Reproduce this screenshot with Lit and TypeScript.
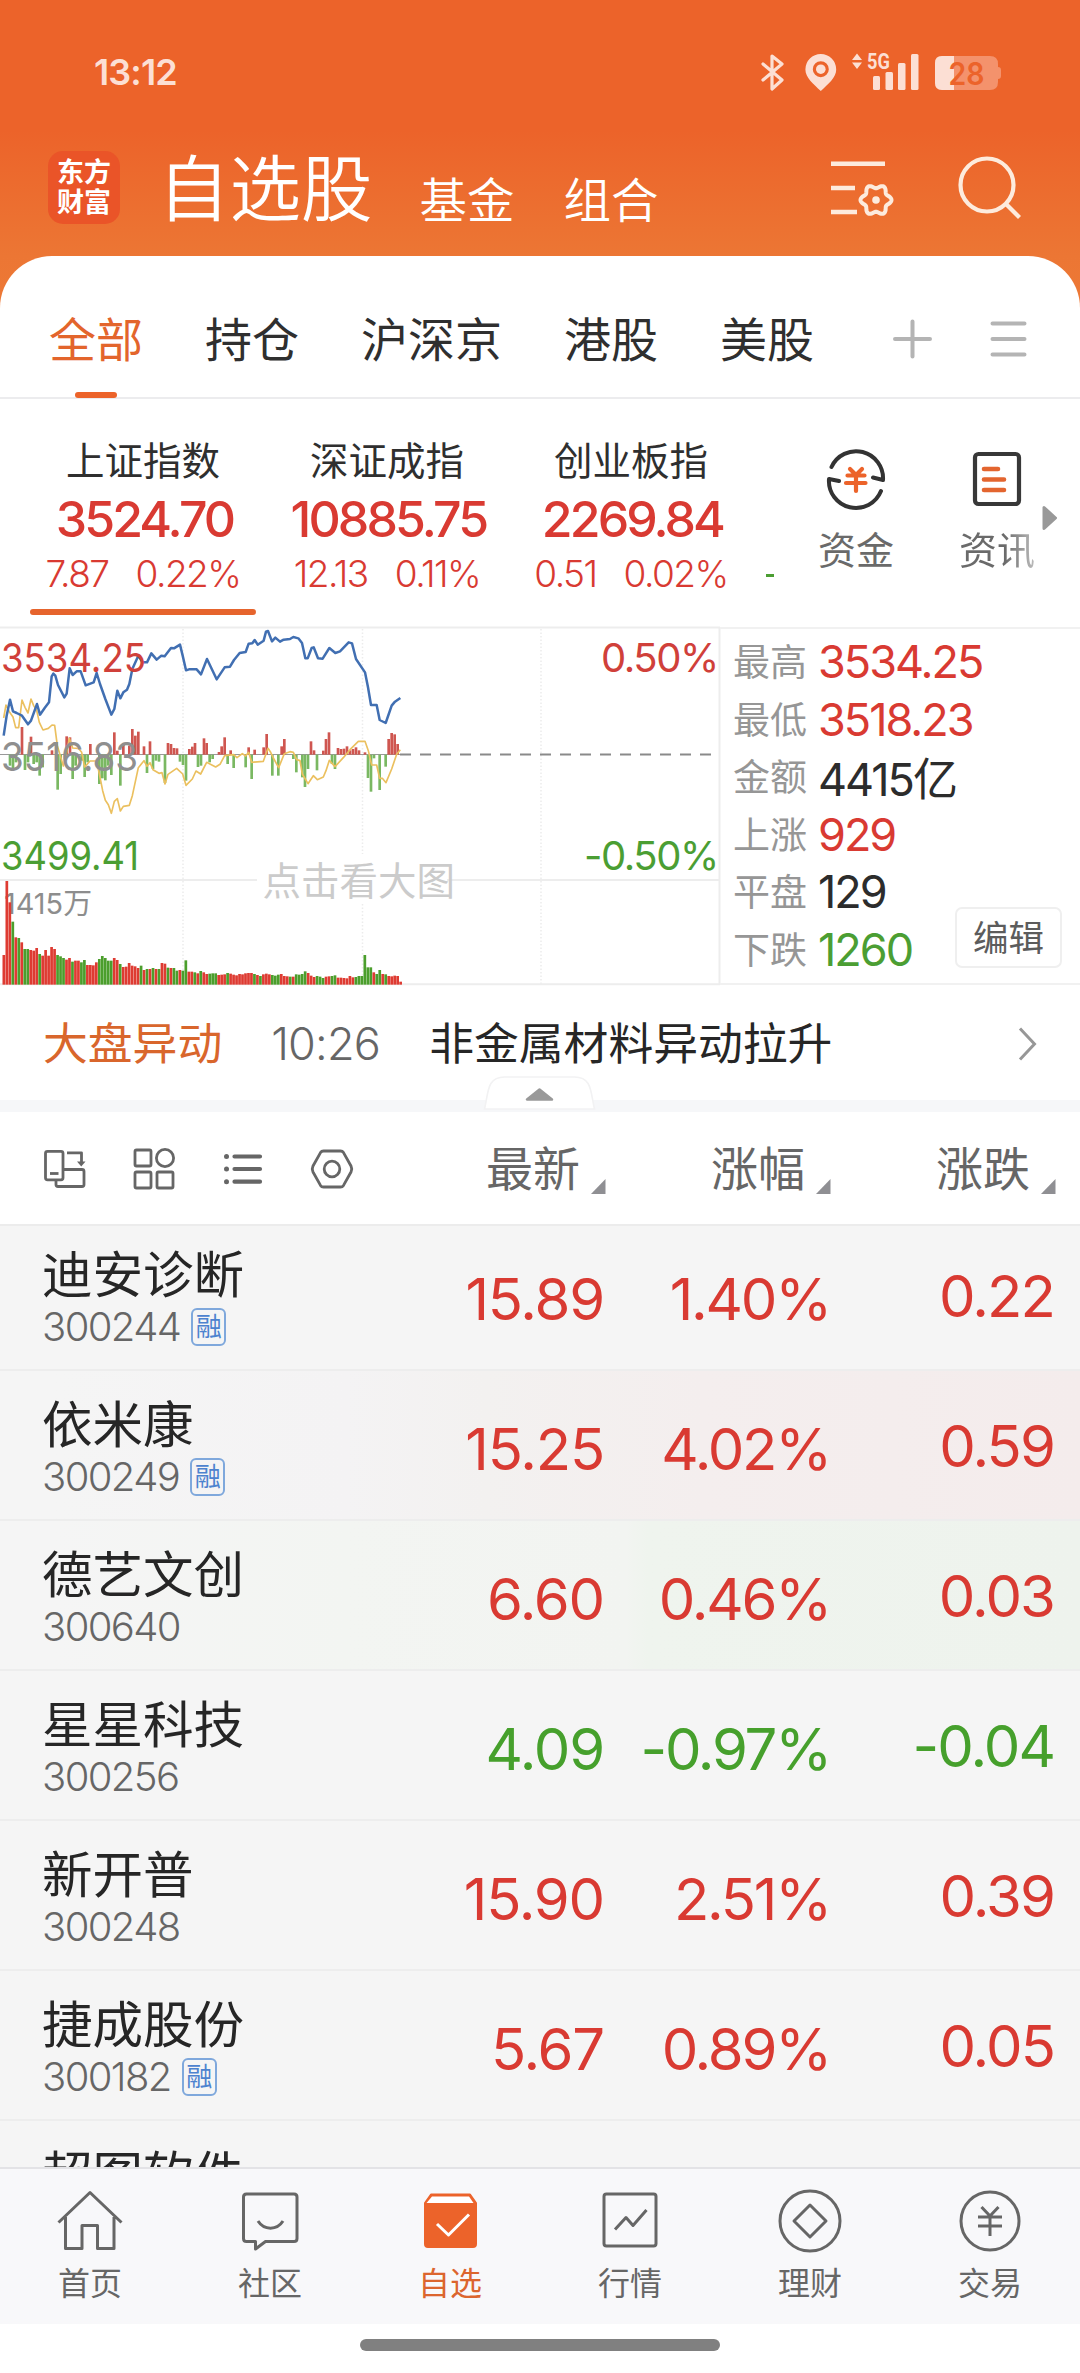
import { LitElement, html, svg, css } from "lit";
import { customElement } from "lit/decorators.js";
import { classMap } from "lit/directives/class-map.js";

type Tone = "up" | "down" | "flat";

interface Stock {
  name: string;
  code: string;
  margin?: boolean;
  price: string;
  pct: string;
  diff: string;
  tone: Tone;
  flash?: "hot" | "cool";
}

const STOCKS: Stock[] = [
  { name: "迪安诊断", code: "300244", margin: true, price: "15.89", pct: "1.40%", diff: "0.22", tone: "up" },
  { name: "依米康", code: "300249", margin: true, price: "15.25", pct: "4.02%", diff: "0.59", tone: "up", flash: "hot" },
  { name: "德艺文创", code: "300640", price: "6.60", pct: "0.46%", diff: "0.03", tone: "up", flash: "cool" },
  { name: "星星科技", code: "300256", price: "4.09", pct: "-0.97%", diff: "-0.04", tone: "down" },
  { name: "新开普", code: "300248", price: "15.90", pct: "2.51%", diff: "0.39", tone: "up" },
  { name: "捷成股份", code: "300182", margin: true, price: "5.67", pct: "0.89%", diff: "0.05", tone: "up" },
  { name: "超图软件", code: "", price: "", pct: "", diff: "", tone: "up" },
];

const INDEXES = [
  { name: "上证指数", value: "3524.70", diff: "7.87", pct: "0.22%", active: true },
  { name: "深证成指", value: "10885.75", diff: "12.13", pct: "0.11%", active: false },
  { name: "创业板指", value: "2269.84", diff: "0.51", pct: "0.02%", active: false },
];

const STATS: { label: string; value: string; tone: Tone }[] = [
  { label: "最高", value: "3534.25", tone: "up" },
  { label: "最低", value: "3518.23", tone: "up" },
  { label: "金额", value: "4415亿", tone: "flat" },
  { label: "上涨", value: "929", tone: "up" },
  { label: "平盘", value: "129", tone: "flat" },
  { label: "下跌", value: "1260", tone: "down" },
];

/* Chart data is kept at three units per pixel. */
const PRICE_LINE =
  "11,380 20,320 30,272 39,307 50,312 66,320 84,346 93,335 111,285 120,317 134,297 147,280 155,202 160,194 166,200 174,228 193,265 200,254 209,178 218,198 230,187 242,187 257,229 281,220 290,192 300,225 316,270 334,317 343,300 352,245 361,268 370,250 381,242 388,225 397,180 415,140 428,160 441,160 454,133 470,152 484,140 494,142 513,117 522,118 540,107 548,140 558,184 567,181 590,181 603,196 621,150 650,211 674,175 690,173 702,153 719,132 737,129 746,104 757,103 764,93 773,107 791,95 798,68 804,66 816,97 826,86 840,98 851,92 870,90 880,84 895,88 906,102 916,148 923,148 935,117 941,115 954,148 968,149 988,117 1006,132 1020,127 1046,100 1056,103 1068,150 1095,190 1104,235 1113,288 1130,288 1139,333 1157,342 1175,290 1185,278 1201,267";
const AVG_LINE =
  "11,327 18,288 28,308 39,324 47,356 56,356 66,273 75,295 84,312 93,270 101,290 110,304 118,340 129,363 145,358 156,348 164,349 172,410 190,471 200,430 208,388 218,417 235,418 245,430 254,474 270,456 290,456 298,495 308,545 316,574 325,587 334,613 343,577 352,569 361,606 370,592 388,589 397,560 415,476 432,455 441,472 450,461 459,482 477,493 486,491 495,525 504,496 530,478 548,495 558,529 577,510 588,486 602,495 620,460 647,474 660,466 674,440 701,437 711,446 727,434 737,441 746,430 755,460 790,457 804,418 812,430 820,447 836,476 853,434 870,428 880,430 890,452 900,455 907,495 924,524 940,500 952,512 970,504 978,485 988,454 1005,473 1030,446 1050,422 1075,397 1095,397 1105,425 1115,468 1130,468 1139,508 1147,508 1158,521 1175,480 1190,436 1201,422";
const PULSE: [number, number][] = [
  [66, 354], [93, 383], [156, 424], [200, 382], [210, 385], [271, 405], [343, 370], [352, 425], [370, 405], [388, 410],
  [397, 360], [406, 380], [415, 368], [432, 412], [450, 397], [504, 402], [513, 405], [522, 417], [531, 418], [568, 420],
  [577, 413], [585, 402], [612, 388], [620, 402], [657, 429], [665, 412], [674, 385], [692, 424], [746, 415], [764, 422], [791, 415],
  [800, 375], [845, 412], [853, 390], [933, 397], [942, 424], [970, 425], [978, 390], [987, 370], [1014, 417], [1023, 420],
  [1032, 419], [1041, 412], [1050, 424], [1059, 420], [1068, 415], [1077, 424], [1095, 430], [1166, 390], [1175, 372],
  [1184, 376], [1193, 405], [30, 470], [39, 478], [48, 460], [75, 483], [84, 460], [101, 465], [110, 460], [119, 500],
  [128, 475], [173, 542], [182, 495], [218, 510], [227, 470], [245, 455], [254, 504], [263, 460], [298, 525], [307, 508],
  [316, 514], [325, 470], [334, 498], [361, 530], [441, 492], [459, 480], [468, 455], [477, 458], [495, 522], [540, 458],
  [549, 468], [558, 515], [594, 474], [603, 470], [629, 460], [638, 450], [683, 465], [701, 477], [737, 475], [755, 510],
  [817, 500], [835, 500], [880, 450], [889, 490], [907, 505], [915, 534], [924, 480], [951, 484], [996, 465], [1005, 480],
  [1104, 507], [1113, 548], [1122, 448], [1139, 543], [1157, 473],
];
const VOLUME =
  "r1038 r816 r880 g938 r985 g987 r1000 g1020 g1020 r1023 r1025 r1017 g1035 r1040 r1023 r1040 r1014 r1020 g1038 g1042 g1047 r1052 r1047 g1058 r1055 r1055 g1060 g1053 r1068 r1068 r1069 r1060 g1050 g1041 g1047 g1055 g1055 r1047 r1053 g1065 r1074 r1073 r1062 r1070 r1072 r1077 g1070 r1083 g1080 r1080 g1077 r1080 g1080 r1062 r1064 g1076 r1077 g1077 g1085 r1083 g1085 g1054 r1088 r1088 g1090 r1093 g1086 r1090 r1095 g1094 g1093 g1093 r1098 r1097 r1096 g1092 r1094 r1097 r1099 r1095 r1096 r1093 r1092 r1092 g1095 r1098 g1101 r1096 r1094 r1096 g1098 g1100 g1097 r1095 r1101 r1102 g1103 r1103 g1096 g1097 g1095 g1087 r1092 r1100 r1104 g1101 g1103 g1107 r1103 r1102 g1101 g1099 r1106 r1106 r1107 r1108 r1101 r1105 g1104 g1101 g1101 g1038 g1075 g1075 r1090 g1095 g1083 r1095 g1096 r1101 r1102 r1100 r1101 r1118".split(" ");

const cogPath = (cx: number, cy: number, r: number, depth: number, lobes: number): string => {
  const pts: string[] = [];
  for (let i = 0; i < 120; i++) {
    const a = (i / 120) * Math.PI * 2;
    const rr = r + depth * Math.cos(a * lobes);
    pts.push(`${(cx + rr * Math.cos(a)).toFixed(2)},${(cy + rr * Math.sin(a)).toFixed(2)}`);
  }
  return `M${pts.join("L")}Z`;
};

const FONT = css`"Inter", "Noto Sans CJK SC", sans-serif`;

@customElement("status-bar")
class StatusBar extends LitElement {
  static styles = css`
    :host { display: flex; height: 144px; padding: 0 78px 0 94px; justify-content: space-between; align-items: center; box-sizing: border-box; font-family: ${FONT}; color: #fcdfd4; }
    .time { font-size: 36px; font-weight: 600; letter-spacing: -0.9px; line-height: 40px; }
    .icons { display: block; overflow: visible; }
    .net { font: 700 19px "Roboto", sans-serif; fill: #fcdfd4; }
    .bat { font: 600 31px "Inter", sans-serif; fill: #ec632a; }
  `;
  render() {
    return html`
      <span class="time">13:12</span>
      <svg class="icons" width="241" height="56" viewBox="761 44 241 56" fill="#fcdfd4">
        <path d="M763 64l19 16-10 9V56l10 8-19 16" fill="none" stroke="#fcdfd4" stroke-width="3.2" stroke-linejoin="round" stroke-linecap="round" />
        <path fill-rule="evenodd" d="M820.8 54a15.4 15.4 0 0 1 15.4 15.400c0 8-8 14.500-15.400 21.600-7.400-7.100-15.400-13.600-15.400-21.600A15.400 15.400 0 0 1 820.800 54zm0 7.200a8 8 0 1 0 0 16 8 8 0 0 0 0-16z" />
        <circle cx="820.8" cy="69.200" r="4.800" />
        <path d="M852 60l5-6.500 5 6.500zM852 62.500h10l-5 6.500z" />
        <text class="net" transform="translate(867 69) scale(0.96 1.16)">5G</text>
        <rect x="873" y="76" width="7" height="14" rx="1.500" />
        <rect x="885.500" y="72" width="7.500" height="18" rx="1.500" />
        <rect x="898" y="63" width="7.500" height="27" rx="1.500" />
        <rect x="911" y="54" width="7.500" height="36" rx="1.500" />
        <path d="M942 56h48q8 0 8 8v3q3 0 3 3v6q0 3-3 3v3q0 8-8 8h-48q-7 0-7-7V63q0-7 7-7z" fill="#f4926c" />
        <path d="M954 56v34h-12q-7 0-7-7V63q0-7 7-7z" />
        <text class="bat" x="948.500" y="84.500" textLength="36" lengthAdjust="spacingAndGlyphs">28</text>
      </svg>
    `;
  }
}

@customElement("app-header")
class AppHeader extends LitElement {
  static styles = css`
    :host { display: flex; height: 112px; box-sizing: border-box; padding: 0 58px 0 48px; align-items: flex-start; font-family: ${FONT}; color: #fff; }
    .logo { width: 72px; height: 73px; margin-top: 7px; border-radius: 15px; background: #ea5428; display: flex; flex-direction: column; align-items: center; justify-content: center; font-size: 27px; line-height: 30px; font-weight: 700; }
    .title { margin: 3px 0 0 38px; font-size: 71.500px; line-height: 84px; }
    .sub { margin: 32px 0 0 49px; font-size: 47.500px; line-height: 50px; }
    .sub.first { margin-left: 47px; }
    .tools { margin: 10px 0 0 auto; display: flex; }
    .title, .sub { font-weight: 350; }
  `;
  render() {
    return html`
      <div class="logo"><span>东方</span><span>财富</span></div>
      <div class="title">自选股</div>
      <div class="sub first">基金</div>
      <div class="sub">组合</div>
      <svg class="tools" width="193" height="70" viewBox="829 153 193 70" fill="none" stroke="#fdebdd" stroke-width="4.600">
        <path d="M831 162.700h54M831 187h24M831 211h26" />
        <path d=${cogPath(876, 199, 13.6, 1.9, 6)} stroke-width="4" />
        <circle cx="876" cy="199" r="3.800" fill="#fdebdd" stroke="none" />
        <circle cx="987" cy="184" r="26.500" stroke-width="4.200" />
        <path d="M1006 203l13.500 13.500" stroke-width="4.200" />
      </svg>
    `;
  }
}

@customElement("group-tabs")
class GroupTabs extends LitElement {
  static styles = css`
    :host { display: flex; height: 143px; box-sizing: border-box; padding: 0 52px 0 49px; border-bottom: 2px solid #ececee; font-family: ${FONT}; color: #2f2f2f; }
    .tab { display: flex; flex-direction: column; align-items: center; font-size: 47px; line-height: 54px; margin-right: 62px; padding-top: 57px; box-sizing: border-box; height: 142px; justify-content: space-between; font-weight: 400; }
    .active { color: #e3652c; }
    .mark { width: 42px; height: 6px; border-radius: 3px; }
    .active .mark { background: #ec632a; }
    .tools { margin: 60px 0 0 auto; }
  `;
  render() {
    return html`
      ${["全部", "持仓", "沪深京", "港股", "美股"].map(
        (t, i) => html`<div class=${classMap({ tab: true, active: i === 0 })}><span>${t}</span><i class="mark"></i></div>`
      )}
      <svg class="tools" width="138" height="48" viewBox="890 316 138 48" stroke="#b4b4b4" stroke-width="4" stroke-linecap="round">
        <path d="M895 339h35M912.500 321.500v35M992.500 323.500h32M992.500 339h32M992.500 354.500h32" />
      </svg>
    `;
  }
}

@customElement("index-strip")
class IndexStrip extends LitElement {
  static styles = css`
    :host { display: flex; height: 228px; box-sizing: border-box; padding-left: 21px; font-family: ${FONT}; overflow: hidden; }
    .item { width: 244px; flex: none; display: flex; flex-direction: column; align-items: center; color: #d93a32; padding-top: 37px; box-sizing: border-box; }
    .name { font-size: 38.500px; line-height: 50px; color: #2f2f2f; }
    .value { font-size: 50px; line-height: 60px; margin-top: 3px; font-weight: 500; letter-spacing: -2.900px; margin-right: -2.900px; }
    .chg { display: flex; gap: 27px; font-size: 37px; line-height: 44px; margin-top: 3px; letter-spacing: -1.500px; font-weight: 350; }
    .bar { width: 226px; height: 6px; border-radius: 3px; margin-top: 13px; }
    .bar.on { background: #e6642d; }
    .next { width: 8px; flex: none; height: 3px; background: #4b9e33; margin: 175px 0 0 13px; }
    .tools { display: flex; margin-left: 11.500px; padding-top: 48px; color: #6a6a6a; align-items: flex-start; }
    .tool { width: 141px; flex: none; display: flex; flex-direction: column; align-items: center; font-size: 38px; line-height: 48px; gap: 15px; }
    .tool.fade .label { background: linear-gradient(90deg, #6a6a6a 60%, #bdbdbd 100%); -webkit-background-clip: text; color: transparent; }
    .arrow { margin: 57px 0 0 -27px; }
    svg { display: block; flex: none; }
  `;
  render() {
    return html`
      ${INDEXES.map(
        (x) => html`<div class="item">
          <span class="name">${x.name}</span>
          <span class="value">${x.value}</span>
          <span class="chg"><span>${x.diff}</span><span>${x.pct}</span></span>
          <i class=${classMap({ bar: true, on: x.active })}></i>
        </div>`
      )}
      <i class="next"></i>
      <div class="tools">
        <div class="tool">
          <svg width="64" height="64" viewBox="824 448 64 64" fill="none" stroke="#333" stroke-width="4" stroke-linecap="round" stroke-linejoin="round">
            <path d="M831.500 468A27 27 0 0 1 883 481l-10-2.500M881 492a27 27 0 0 1-52-12l10 2" />
            <path d="M850 470l6 6 6-6M847.500 476.500h17M846 484h19.500M856 476v16" stroke="#ec632a" stroke-width="4.200" />
          </svg>
          <span>资金</span>
        </div>
        <div class="tool fade">
          <svg width="64" height="64" viewBox="965 448 64 64" fill="none" stroke-linecap="round">
            <rect x="975" y="455" width="44" height="50" rx="3.500" stroke="#383838" stroke-width="4.200" />
            <path d="M984 470h14M984 480.500h20M984 491h20" stroke="#e3652f" stroke-width="4.600" />
          </svg>
          <span class="label">资讯</span>
        </div>
        <svg class="arrow" width="18" height="28" viewBox="1040 505 18 28"><path d="M1043 508.500v21l11.500-10.500z" fill="#999" stroke="#999" stroke-width="3" stroke-linejoin="round" /></svg>
      </div>
    `;
  }
}

@customElement("market-chart")
class MarketChart extends LitElement {
  static styles = css`
    :host { display: block; width: 720px; height: 358px; }
    svg { display: block; overflow: visible; }
    text { font-family: ${FONT}; font-size: 40px; }
    .up { fill: #d0403a; }
    .down { fill: #4b9e33; }
    .mid { fill: #8f8f8f; }
    .pct { letter-spacing: -1.400px; text-anchor: end; }
    .vol { fill: #8d8d8d; font-size: 29px; }
    .hint { fill: #cbcbcb; font-size: 38.500px; }
  `;
  render() {
    return html`<svg width="720" height="358" viewBox="0 628 720 358">
      <path d="M183 630v355M362.500 630v225M362.500 905v80M541 630v355" stroke="#ececec" stroke-width="1.500" stroke-dasharray="1.500 2" />
      <path d="M0 628.500h720M0 881h257M447 881h273M0 985.300h720M719.500 628v358" stroke="#ededed" stroke-width="2" fill="none" />
      <text class="vol" x="4" y="914.500" textLength="88" lengthAdjust="spacingAndGlyphs">1415万</text>
      <path d="M0 755.500h400" stroke="#999" stroke-width="1.200" />
      <path d="M400 755.500h312" stroke="#8a8a8a" stroke-width="2.200" stroke-dasharray="11 9" />
      <g transform="translate(0 610) scale(0.33333)">
        ${PULSE.map(([x, y]) => svg`<rect x=${x - 4} y=${Math.min(y, 437)} width="8" height=${Math.abs(y - 437)} fill=${y < 437 ? "#cf5650" : "#7ab862"} />`)}
        ${VOLUME.map((v, i) => {
          const top = Number(v.slice(1));
          return svg`<rect x=${7.5 + i * 8.95} y=${top} width="8.100" height=${1127 - top} fill=${v[0] === "r" ? "#de3b32" : "#4b9e2c"} />`;
        })}
        <polyline points=${AVG_LINE} fill="none" stroke="#ebc05f" stroke-width="5" stroke-linejoin="round" />
        <polyline points=${PRICE_LINE} fill="none" stroke="#416fb2" stroke-width="7.500" stroke-linejoin="round" />
      </g>
      <text class="up" x="1" y="672.500" textLength="145" lengthAdjust="spacingAndGlyphs">3534.25</text>
      <text class="mid" x="1" y="771.500" textLength="137" lengthAdjust="spacingAndGlyphs">3516.83</text>
      <text class="down" x="1" y="871" textLength="138" lengthAdjust="spacingAndGlyphs">3499.41</text>
      <text class="up pct" x="718" y="672.500">0.50%</text>
      <text class="down pct" x="718" y="871">-0.50%</text>
      <text class="hint" x="262.500" y="895.500">点击看大图</text>
    </svg>`;
  }
}

@customElement("market-stats")
class MarketStats extends LitElement {
  static styles = css`
    :host { display: flex; flex: 1; justify-content: space-between; box-sizing: border-box; height: 358px; padding: 4px 18px 0 13px; border-top: 2px solid #f1f1f1; border-bottom: 2px solid #f1f1f1; font-family: ${FONT}; }
    .row { display: flex; height: 57.500px; align-items: center; gap: 11px; font-size: 37px; color: #969696; }
    .k { padding-bottom: 3px; }
    .v { font-size: 45px; letter-spacing: -2px; font-weight: 400; }
    .up { color: #d93a32; }
    .down { color: #4b9e33; }
    .flat { color: #2c2c2c; }
    .edit { align-self: flex-end; margin-bottom: 15px; margin-left: -80px; width: 107px; height: 61px; box-sizing: border-box; border: 2px solid #efefef; border-radius: 7px; text-align: center; font-size: 35.500px; line-height: 60px; color: #5c5c5c; }
  `;
  render() {
    return html`
      <div>
        ${STATS.map((s) => html`<div class="row"><span class="k">${s.label}</span><span class="v ${s.tone}">${s.value}</span></div>`)}
      </div>
      <div class="edit">编辑</div>
    `;
  }
}

@customElement("news-line")
class NewsLine extends LitElement {
  static styles = css`
    :host { display: flex; position: relative; height: 127px; padding: 3px 43px 0 43px; box-sizing: border-box; align-items: center; font-family: ${FONT}; font-size: 44.800px; line-height: 56px; border-bottom: 12px solid #f6f7f9; }
    .tag { color: #d9662c; }
    .time { color: #666; margin-left: 49px; font-size: 45px; letter-spacing: -0.800px; font-weight: 350; width: 110px; white-space: nowrap; }
    .text { color: #262626; margin-left: 48px; }
    .go { margin-left: auto; }
    .fold { position: absolute; left: 482px; bottom: -11px; display: block; }
  `;
  render() {
    return html`
      <span class="tag">大盘异动</span>
      <span class="time">10:26</span>
      <span class="text">非金属材料异动拉升</span>
      <svg class="go" width="20" height="36" viewBox="1017 1026 20 36"><path d="M1020 1028.500l14.500 15.500-14.500 15.500" fill="none" stroke="#979797" stroke-width="3" /></svg>
      <svg class="fold" width="114" height="36" viewBox="482 1077 114 36">
        <path d="M484.500 1111c4-16 2-32 20-32h70c18 0 16 16 20 32z" fill="#fff" stroke="#f2f2f3" stroke-width="1.600" />
        <path d="M527 1101.500h25l-12.500-10z" fill="#999" stroke="#999" stroke-width="2.500" stroke-linejoin="round" />
      </svg>
    `;
  }
}

@customElement("list-head")
class ListHead extends LitElement {
  static styles = css`
    :host { display: flex; height: 114px; box-sizing: border-box; border-bottom: 2px solid #ececec; font-family: ${FONT}; color: #666; font-size: 47px; line-height: 60px; }
    .icons { margin: 36px 0 0 42px; flex: none; }
    .cols { display: flex; margin-left: auto; padding: 27px 24px 0 0; }
    .col { width: 225px; display: flex; justify-content: flex-end; align-items: flex-start; gap: 11px; }
    .col svg { margin-top: 40px; }
  `;
  render() {
    return html`
      <svg class="icons" width="316" height="44" viewBox="42 1149 316 44" fill="none" stroke="#666" stroke-width="2.800" stroke-linejoin="round">
        <rect x="45.500" y="1152.300" width="17.500" height="28.500" rx="2" />
        <path d="M50 1174.500h8.500" />
        <path d="M63 1170.500h19q2 0 2 2v13q0 2-2 2H58q-2 0-2-2V1181M67 1153.800h14.500v11" />
        <path d="M77 1162.500h8.500l-4.250 5z" fill="#666" stroke="none" />
        <rect x="135" y="1151" width="16" height="16" rx="1.500" />
        <circle cx="165" cy="1159" r="8.600" />
        <rect x="135" y="1173" width="16" height="16" rx="1.500" />
        <rect x="157" y="1173" width="16" height="16" rx="1.500" />
        <path d="M234.500 1157.500h25.500M234.500 1170h25.500M234.500 1182.700h25.500" stroke-width="4.200" stroke-linecap="round" />
        <g fill="#666" stroke="none"><circle cx="226.500" cy="1157.500" r="2.500" /><circle cx="226.500" cy="1170" r="2.500" /><circle cx="226.500" cy="1182.700" r="2.500" /></g>
        <path d="M323.500 1152h17q2 0 3 1.600l7.500 13.400q1.500 3 0 6l-7.500 13.400q-1 1.600-3 1.600h-17q-2 0-3-1.600l-7.500-13.400q-1.500-3 0-6l7.500-13.400q1-1.600 3-1.600z" />
        <circle cx="332" cy="1170" r="7.800" />
      </svg>
      <div class="cols">
        ${["最新", "涨幅", "涨跌"].map(
          (c) => html`<div class="col"><span>${c}</span><svg width="15" height="15" viewBox="0 0 15 15"><path d="M14.500 0v15H0z" fill="#8f8f93" /></svg></div>`
        )}
      </div>
    `;
  }
}

@customElement("stock-list")
class StockList extends LitElement {
  static styles = css`
    :host { display: block; height: 941px; overflow: hidden; background: #f5f5f5; font-family: ${FONT}; }
    .rows { margin-top: -5px; }
    .row { display: grid; grid-template-columns: 244px 318px 223px 226px; height: 150px; box-sizing: border-box; padding: 26px 27px 0 42px; border-bottom: 2px solid #ededed; }
    .hot { background: linear-gradient(90deg, #f5f5f5 5%, #f4f3f4 32%, #f3f1f0 45%, #f4eeee 65%, #f4ecec 100%); }
    .cool { background: linear-gradient(90deg, #f5f5f5 5%, #f3f5f2 32%, #f2f4f1 58%, #eff4ee 60%, #eef3ed 100%); }
    .name { font-size: 50.500px; line-height: 52px; padding-top: 2px; color: #262626; white-space: nowrap; }
    .code { display: flex; align-items: center; height: 51px; font-size: 40px; letter-spacing: -1.600px; color: #666; font-weight: 350; }
    .badge { width: 35px; height: 38px; box-sizing: border-box; border: 2px solid #7fa8dc; border-radius: 6px; color: #4d83cf; font-size: 26px; line-height: 34px; letter-spacing: 0; text-align: center; margin-left: 11px; font-weight: 400; }
    .num { font-size: 58px; line-height: 60px; text-align: right; letter-spacing: -1.200px; padding-top: 22px; }
    .num.pct { letter-spacing: -2.200px; margin-right: -3px; }
    .num.last { padding-top: 19px; letter-spacing: -1.900px; margin-right: -1px; }
    .up { color: #d93a32; }
    .down { color: #46a02c; }
  `;
  render() {
    return html`<div class="rows">
      ${STOCKS.map(
        (s) => html`<div class=${classMap({ row: true, hot: s.flash === "hot", cool: s.flash === "cool" })}>
          <div>
            <div class="name">${s.name}</div>
            <div class="code"><span>${s.code}</span>${s.margin ? html`<span class="badge">融</span>` : ""}</div>
          </div>
          <div class="num ${s.tone}">${s.price}</div>
          <div class="num pct ${s.tone}">${s.pct}</div>
          <div class="num last ${s.tone}">${s.diff}</div>
        </div>`
      )}
    </div>`;
  }
}

const NAV = [
  {
    label: "首页",
    icon: svg`<path d="M2.500 33.500L34 3.500l31.500 30M9.500 28v31.500H26V36.500h15.500v23H58V28" transform="translate(-2 0)"/>`,
  },
  {
    label: "社区",
    icon: svg`<path d="M8.500 5H56q3 0 3 3v41.500q0 3-3 3H27.500L17.500 60v-7.500h-9q-3 0-3-3V8q0-3 3-3zM20 32c6 9.500 19 9.500 25 0"/>`,
  },
  {
    label: "自选",
    icon: svg`<path d="M13 5.500h39l6 8.500v41q0 3-3 3H10q-3 0-3-3V14z" fill="#ec632a" stroke="#ec632a" stroke-width="2"/><path d="M14 7.500h37l4.500 6.500h-47z" fill="#fff" stroke="none"/><path d="M19 35l11.500 11L51 25.500" stroke="#fff"/>`,
  },
  {
    label: "行情",
    icon: svg`<rect x="6" y="5" width="52" height="52" rx="2.500"/><path d="M17 40.500l11-12 7 8L48.500 21"/>`,
  },
  {
    label: "理财",
    icon: svg`<circle cx="32" cy="32" r="30"/><path d="M32 16l16 16-16 16-16-16z"/>`,
  },
  {
    label: "交易",
    icon: svg`<circle cx="32" cy="32" r="29"/><path d="M23.500 18l8.500 9 8.500-9M20 28h24M20 37h24M32 27v20"/>`,
  },
];

@customElement("bottom-nav")
class BottomNav extends LitElement {
  static styles = css`
    :host { display: flex; height: 157px; box-sizing: border-box; border-top: 2px solid #e3e3e6; background: #f8f8fa; font-family: ${FONT}; color: #666; }
    .item { width: 180px; display: flex; flex-direction: column; align-items: center; padding-top: 20px; font-size: 32px; line-height: 40px; gap: 11px; }
    .active { color: #dc652e; }
    svg { display: block; overflow: visible; }
  `;
  render() {
    return NAV.map(
      (n) => html`<div class=${classMap({ item: true, active: n.label === "自选" })}>
        <svg width="64" height="64" viewBox="0 0 64 64" fill="none" stroke="#666" stroke-width="3" stroke-linejoin="round">${n.icon}</svg>
        <span>${n.label}</span>
      </div>`
    );
  }
}

@customElement("app-root")
class AppRoot extends LitElement {
  static styles = css`
    :host { display: block; width: 1080px; height: 2373px; overflow: hidden; background: #fff; }
    .top { background: linear-gradient(180deg, #ec632a 0, #ec632a 130px, #ec7634 256px, #ed7936 310px); }
    .panel { background: #fff; border-radius: 52px 52px 0 0; }
    .board { display: flex; }
    .gesture { height: 48px; display: flex; justify-content: center; }
    .pill { width: 360px; height: 12px; border-radius: 6px; background: #808080; margin-top: 15px; }
  `;
  render() {
    return html`
      <div class="top">
        <status-bar></status-bar>
        <app-header></app-header>
        <div class="panel"><group-tabs></group-tabs></div>
      </div>
      <index-strip></index-strip>
      <div class="board"><market-chart></market-chart><market-stats></market-stats></div>
      <news-line></news-line>
      <list-head></list-head>
      <stock-list></stock-list>
      <bottom-nav></bottom-nav>
      <div class="gesture"><div class="pill"></div></div>
    `;
  }
}
